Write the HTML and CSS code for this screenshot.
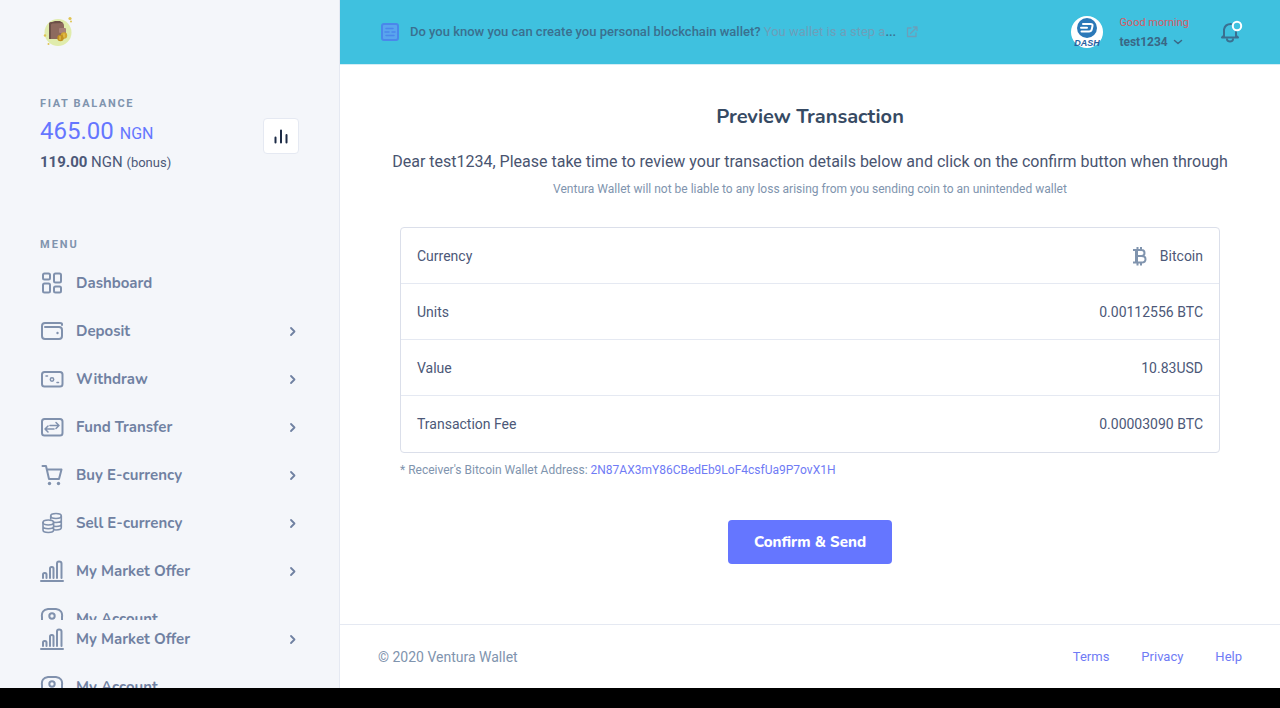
FILE: index.html
```html
<!DOCTYPE html>
<html lang="en">
<head>
<meta charset="utf-8">
<meta name="viewport" content="width=device-width, initial-scale=1">
<title>Preview Transaction - Ventura Wallet</title>
<link rel="stylesheet" href="styles.css">
</head>
<body>
<svg class="sprite" aria-hidden="true">
  <symbol id="chevron" viewBox="0 0 12 12"><path d="M4 3 7.500 6.500 4 10"/></symbol>
  <symbol id="market" viewBox="0 0 24 24"><path d="M1 22h22M3 19v-3.500q0-1.500 1.500-1.500h.5q1.500 0 1.500 1.500V19M10 19V9.500Q10 8 11.500 8h.5q1.500 0 1.500 1.500V19M17 19V4.500Q17 2.500 19 2.500q2.500 0 2.500 2V19"/></symbol>
  <symbol id="account" viewBox="0 0 24 24"><path d="M2 23V10Q1 3 8 2h8q7 1 6 8v13"/><circle cx="12" cy="9" r="2.700"/><path d="M5 21q7-7 14 0"/></symbol>
</svg>
<div class="app">
  <aside class="sidebar">
    <a class="brand" href="#" aria-label="Ventura Wallet">
      <svg width="36" height="36" viewBox="0 0 36 36">
        <circle cx="18" cy="18.500" r="13.500" fill="#e0ecac"/>
        <path d="M9 10q0-2 3-2h8q4 0 4 4v2l2 2v7l-3 2H9z" fill="#8d6a5e"/>
        <path d="M9 10q0-2 3-2l3-1h5l3 2-11 0.500-1 1V25H9z" fill="#6d5148"/>
        <rect x="19" y="14" width="7" height="5" rx="1" fill="#a78178"/>
        <circle cx="24" cy="21.500" r="3.200" fill="#d2a62e"/><circle cx="20.500" cy="24" r="3.200" fill="#c2921f"/>
        <path d="M20 22.500v3M24 20v3" stroke="#e8ca62"/>
        <g fill="#dfc452"><circle cx="30" cy="4.500" r="1.600"/><circle cx="31" cy="7.500" r="1"/><circle cx="5" cy="21.500" r="1.200"/><circle cx="8.500" cy="30" r="1"/></g>
      </svg>
    </a>
    <section class="balance">
      <div class="balance-text">
        <h2 class="overline">FIAT BALANCE</h2>
        <p class="amount">465.00 <span class="unit">NGN</span></p>
        <p class="bonus"><b>119.00</b> NGN <span class="note">(bonus)</span></p>
      </div>
      <button class="stats" type="button" aria-label="Statistics"><svg width="16" height="16" viewBox="0 0 16 16"><path d="M2.500 9.500v5M8 2.500v12M13.500 7v7.500"/></svg></button>
    </section>
    <nav class="menu" aria-label="Menu">
      <h2 class="overline menu-title">MENU</h2>
      <ul class="menu-list">
        <li><a class="item" href="#"><svg class="icon" viewBox="0 0 24 24"><rect x="3" y="2.500" width="7" height="6" rx="1.500"/><rect x="14" y="2.500" width="7" height="9" rx="1.500"/><rect x="3" y="12.500" width="7" height="9" rx="1.500"/><rect x="14" y="15.500" width="7" height="6" rx="1.500"/></svg><span class="label">Dashboard</span></a></li>
        <li><a class="item" href="#"><svg class="icon" viewBox="0 0 24 24"><path d="M22 6V5q0-1-2-1H5Q2 4 2 7v10q0 3 3 3h14q3 0 3-3v-6q0-3-3-3H5"/><circle class="dot" cx="17.500" cy="14" r="1.200"/></svg><span class="label">Deposit</span><svg class="chevron"><use href="#chevron"/></svg></a></li>
        <li><a class="item" href="#"><svg class="icon" viewBox="0 0 24 24"><rect x="2" y="5" width="20.500" height="14.500" rx="2.500"/><circle class="fine" cx="12" cy="12.500" r="1.700"/><path class="fine" d="M6 9h1.500M17 15.500h1.500"/></svg><span class="label">Withdraw</span><svg class="chevron"><use href="#chevron"/></svg></a></li>
        <li><a class="item" href="#"><svg class="icon" viewBox="0 0 24 24"><rect x="2" y="4" width="20.500" height="16.500" rx="2.500"/><path class="fine" d="M10 10.500h9m-3-3 3 3-3 3M14 14H5m3-3-3 3 3 3"/></svg><span class="label">Fund Transfer</span><svg class="chevron"><use href="#chevron"/></svg></a></li>
        <li><a class="item" href="#"><svg class="icon" viewBox="0 0 24 24"><path d="M2.500 3h3.500l3 13h10l2.500-9.500H7"/><circle class="dot" cx="9.500" cy="20.500" r="1.700"/><circle class="dot" cx="18.500" cy="20.500" r="1.700"/></svg><span class="label">Buy E-currency</span><svg class="chevron"><use href="#chevron"/></svg></a></li>
        <li><a class="item" href="#"><svg class="icon coins" viewBox="0 0 24 24"><ellipse cx="16" cy="5" rx="5.300" ry="2.500"/><path d="M10.700 5v3M21.300 5v11.500c0 1.400-2.300 2.500-5.300 2.500l-2-.200M21.300 9c0 1.400-2.300 2.500-5.300 2.500l-2-.3M21.300 13c0 1.400-2.300 2.500-5.300 2.500l-1.500-.2"/><ellipse cx="8.300" cy="11.500" rx="5.300" ry="2.500"/><path d="M3 11.500V19c0 1.400 2.300 2.500 5.300 2.500s5.300-1.100 5.300-2.500v-7.500M3 15.200c0 1.400 2.300 2.500 5.300 2.500s5.300-1.100 5.300-2.500"/></svg><span class="label">Sell E-currency</span><svg class="chevron"><use href="#chevron"/></svg></a></li>
        <li><a class="item" href="#"><svg class="icon"><use href="#market"/></svg><span class="label">My Market Offer</span><svg class="chevron"><use href="#chevron"/></svg></a></li>
        <li><a class="item" href="#"><svg class="icon"><use href="#account"/></svg><span class="label">My Account</span></a></li>
      </ul>
    </nav>
    <nav class="menu menu-tail" aria-label="More">
      <ul class="menu-list">
        <li><a class="item" href="#"><svg class="icon"><use href="#market"/></svg><span class="label">My Market Offer</span><svg class="chevron"><use href="#chevron"/></svg></a></li>
        <li><a class="item" href="#"><svg class="icon"><use href="#account"/></svg><span class="label">My Account</span></a></li>
      </ul>
    </nav>
  </aside>
  <div class="page">
    <header class="topbar">
      <a class="news" href="#">
        <svg class="news-icon" viewBox="0 0 20 20"><rect x="2" y="2" width="16" height="16" rx="2"/><path d="M6 6.500h7M5 10h4M12 10h3M6 13.500h8"/></svg>
        <span class="news-text">Do you know you can create you personal blockchain wallet? <span class="news-more">You wallet is a step a</span>...</span>
        <svg class="external" viewBox="0 0 12 12"><path d="M5 2H1.500v8.500H10V7M4.500 7.500 11 1M7.500 1H11v3.500"/></svg>
      </a>
      <div class="tools">
        <button class="user" type="button">
          <svg class="avatar" viewBox="0 0 32 32"><circle cx="16" cy="16" r="16" fill="#fff"/><circle cx="16" cy="12" r="10" fill="#2b78b8"/><path d="M12 8h7.500q2.500 0 2 2l-.8 3.500q-.5 2-2.700 2h-7.500M10 11.800h6" fill="none" stroke="#fff" stroke-width="2"/><text class="avatar-text" x="16" y="29.500">DASH</text></svg>
          <span class="who"><span class="greeting">Good morning</span><span class="name">test1234 <svg class="caret" viewBox="0 0 10 10"><path d="m1.500 3.500 3.500 3 3.500-3"/></svg></span></span>
        </button>
        <button class="bell" type="button" aria-label="Notifications"><svg viewBox="0 0 24 24"><path d="M3 17.500h16M5 17V9.500Q6 4 12 4M17 12v5M3 17.500l2-2M19 17.500l-2-2M8 19.500q.5 2 3 2t3-2"/><circle cx="18" cy="6" r="4.200"/></svg></button>
      </div>
    </header>
    <main class="content">
      <h1 class="title">Preview Transaction</h1>
      <p class="lead">Dear test1234, Please take time to review your transaction details below and click on the confirm button when through</p>
      <p class="disclaimer">Ventura Wallet will not be liable to any loss arising from you sending coin to an unintended wallet</p>
      <table class="details">
        <tbody>
          <tr><th scope="row">Currency</th><td><span class="coin"><svg class="btc" viewBox="0 0 16 20"><path d="M1 4h8.500q3 0 3 3t-3 3H5M9.500 10q4 0 4 3.200T9.500 16.500H1M5.500 1v3M9 1v3M5.500 16.500v3M9 16.500v3"/><path class="stem" d="M4.500 4v12.500"/></svg>Bitcoin</span></td></tr>
          <tr><th scope="row">Units</th><td>0.00112556 BTC</td></tr>
          <tr><th scope="row">Value</th><td>10.83USD</td></tr>
          <tr><th scope="row">Transaction Fee</th><td>0.00003090 BTC</td></tr>
        </tbody>
      </table>
      <p class="address">* Receiver's Bitcoin Wallet Address: <a href="#">2N87AX3mY86CBedEb9LoF4csfUa9P7ovX1H</a></p>
      <button class="confirm" type="button">Confirm &amp; Send</button>
    </main>
    <footer class="footer">
      <span>© 2020 Ventura Wallet</span>
      <nav class="links" aria-label="Footer"><a href="#">Terms</a><a href="#">Privacy</a><a href="#">Help</a></nav>
    </footer>
  </div>
</div>
</body>
</html>
```

FILE: styles.css
```css
* { box-sizing: border-box; }
body { margin: 0; height: 100vh; padding-bottom: 20px; background: #000; color: #526484; font: 14px/20px Roboto, sans-serif; }
h1, h2, p, ul { margin: 0; padding: 0; }
ul { list-style: none; }
a { color: #6f7bf5; text-decoration: none; }
button { border: 0; padding: 0; background: none; color: inherit; font: inherit; cursor: pointer; }
svg { display: block; flex: none; fill: none; stroke: currentColor; stroke-linecap: round; stroke-linejoin: round; }
.sprite { position: absolute; width: 0; height: 0; }
.app { display: flex; height: 100%; background: #fff; }

.sidebar { display: flex; flex-direction: column; flex: none; width: 340px; background: #f4f6fa; border-right: 1px solid #e5e9f2; }
.brand { display: block; padding: 14px 40px 0; }
.brand svg { stroke: none; }
.balance { display: flex; align-items: center; justify-content: space-between; padding: 45px 40px 0; }
.overline { color: #8094ae; font-size: 11px; line-height: 18px; font-weight: 700; letter-spacing: 2px; }
.balance .overline { letter-spacing: 0.15em; }
.amount { color: #6576ff; font-size: 24px; line-height: 36px; }
.unit { font-size: 16px; }
.bonus { padding-bottom: 4px; color: #4c5878; font-size: 15px; line-height: 20px; }
.note { font-size: 13px; }
.stats { display: grid; place-items: center; width: 36px; height: 36px; border: 1px solid #e5e9f2; border-radius: 4px; background: #fff; color: #1c2b46; }
.stats svg { stroke-width: 2; }
.menu { flex: 1; min-height: 0; overflow: hidden; padding: 59px 40px 0; }
.menu-title { margin-bottom: 10px; }
.menu-tail { flex: none; height: 68px; padding-top: 0; }
.menu-list { display: flex; flex-direction: column; gap: 10px; }
.item { display: flex; align-items: center; gap: 12px; height: 38px; color: #7081a2; font: 700 15px/24px Nunito, Lato, sans-serif; }
.icon { width: 24px; height: 24px; color: #8091ad; stroke-width: 2; }
.icon .dot { fill: currentColor; stroke: none; }
.icon .fine { stroke-width: 1.5; }
.coins { stroke-width: 1.6; }
.label { flex: 1; }
.chevron { width: 12px; height: 12px; stroke-width: 1.8; }

.page { display: flex; flex-direction: column; flex: 1; min-width: 0; }
.topbar { display: flex; flex: none; align-items: center; justify-content: space-between; height: 65px; padding: 0 37px 0 40px; background: #3fc1df; border-bottom: 1px solid #d3edf5; }
.news { display: flex; align-items: center; gap: 10px; color: #3a708f; font-size: 13px; font-weight: 500; }
.news-icon { width: 20px; height: 20px; color: #4a87eb; fill: #59a5ee; stroke-width: 2; }
.news-icon path { stroke-width: 1.5; }
.news-more { color: #6c9fba; font-weight: 400; }
.external { width: 12px; height: 12px; color: #6c9fba; stroke-width: 1.3; }
.tools { display: flex; align-items: center; gap: 30px; }
.user { display: flex; align-items: center; gap: 16px; text-align: left; }
.avatar { width: 32px; height: 32px; stroke: none; }
.avatar-text { fill: #27609f; font: italic 700 9px "Liberation Sans", sans-serif; text-anchor: middle; }
.who { display: flex; flex-direction: column; }
.greeting { color: #d65b65; font-size: 11px; line-height: 20px; }
.name { display: flex; align-items: center; gap: 5px; color: #3a6785; font-size: 12px; line-height: 19px; font-weight: 700; }
.caret { width: 10px; height: 10px; stroke-width: 1.5; }
.bell { color: #3a6f90; }
.bell svg { width: 24px; height: 24px; stroke-width: 2; }
.bell circle { stroke: #fff; fill: #3fc1df; }

.content { display: flex; flex-direction: column; flex: 1; padding: 37px 60px 0; }
.title { color: #364a63; font: 700 20px/30px Nunito, Lato, sans-serif; text-align: center; }
.lead { margin: 18px -20px 0; color: #495470; font-size: 16px; line-height: 24px; text-align: center; }
.disclaimer { margin-top: 6px; color: #8094ae; font-size: 12px; line-height: 18px; text-align: center; }
.details { width: 100%; margin-top: 29px; color: #4c5878; border: 1px solid #dbdfea; border-radius: 4px; border-spacing: 0; }
.details th, .details td { height: 56px; padding: 0 16px; border-bottom: 1px solid #e5e9f2; font-weight: 400; text-align: left; }
.details td { text-align: right; }
.details tr:last-child th, .details tr:last-child td { border-bottom: 0; }
.coin { display: flex; align-items: center; justify-content: flex-end; gap: 12px; }
.btc { width: 16px; height: 20px; color: #8094ae; stroke-width: 2; stroke-linecap: butt; }
.btc .stem { stroke-width: 3; }
.address { margin-top: 7px; color: #8094ae; font-size: 12px; }
.confirm { align-self: center; margin-top: 40px; padding: 10px 26px; border-radius: 4px; background: #6576ff; color: #fff; font: 800 15px/24px Nunito, Lato, sans-serif; }
.footer { display: flex; flex: none; align-items: center; justify-content: space-between; height: 64px; padding: 0 38px; border-top: 1px solid #e5e9f2; color: #8094ae; }
.links { display: flex; gap: 32px; font-size: 13px; }
```
